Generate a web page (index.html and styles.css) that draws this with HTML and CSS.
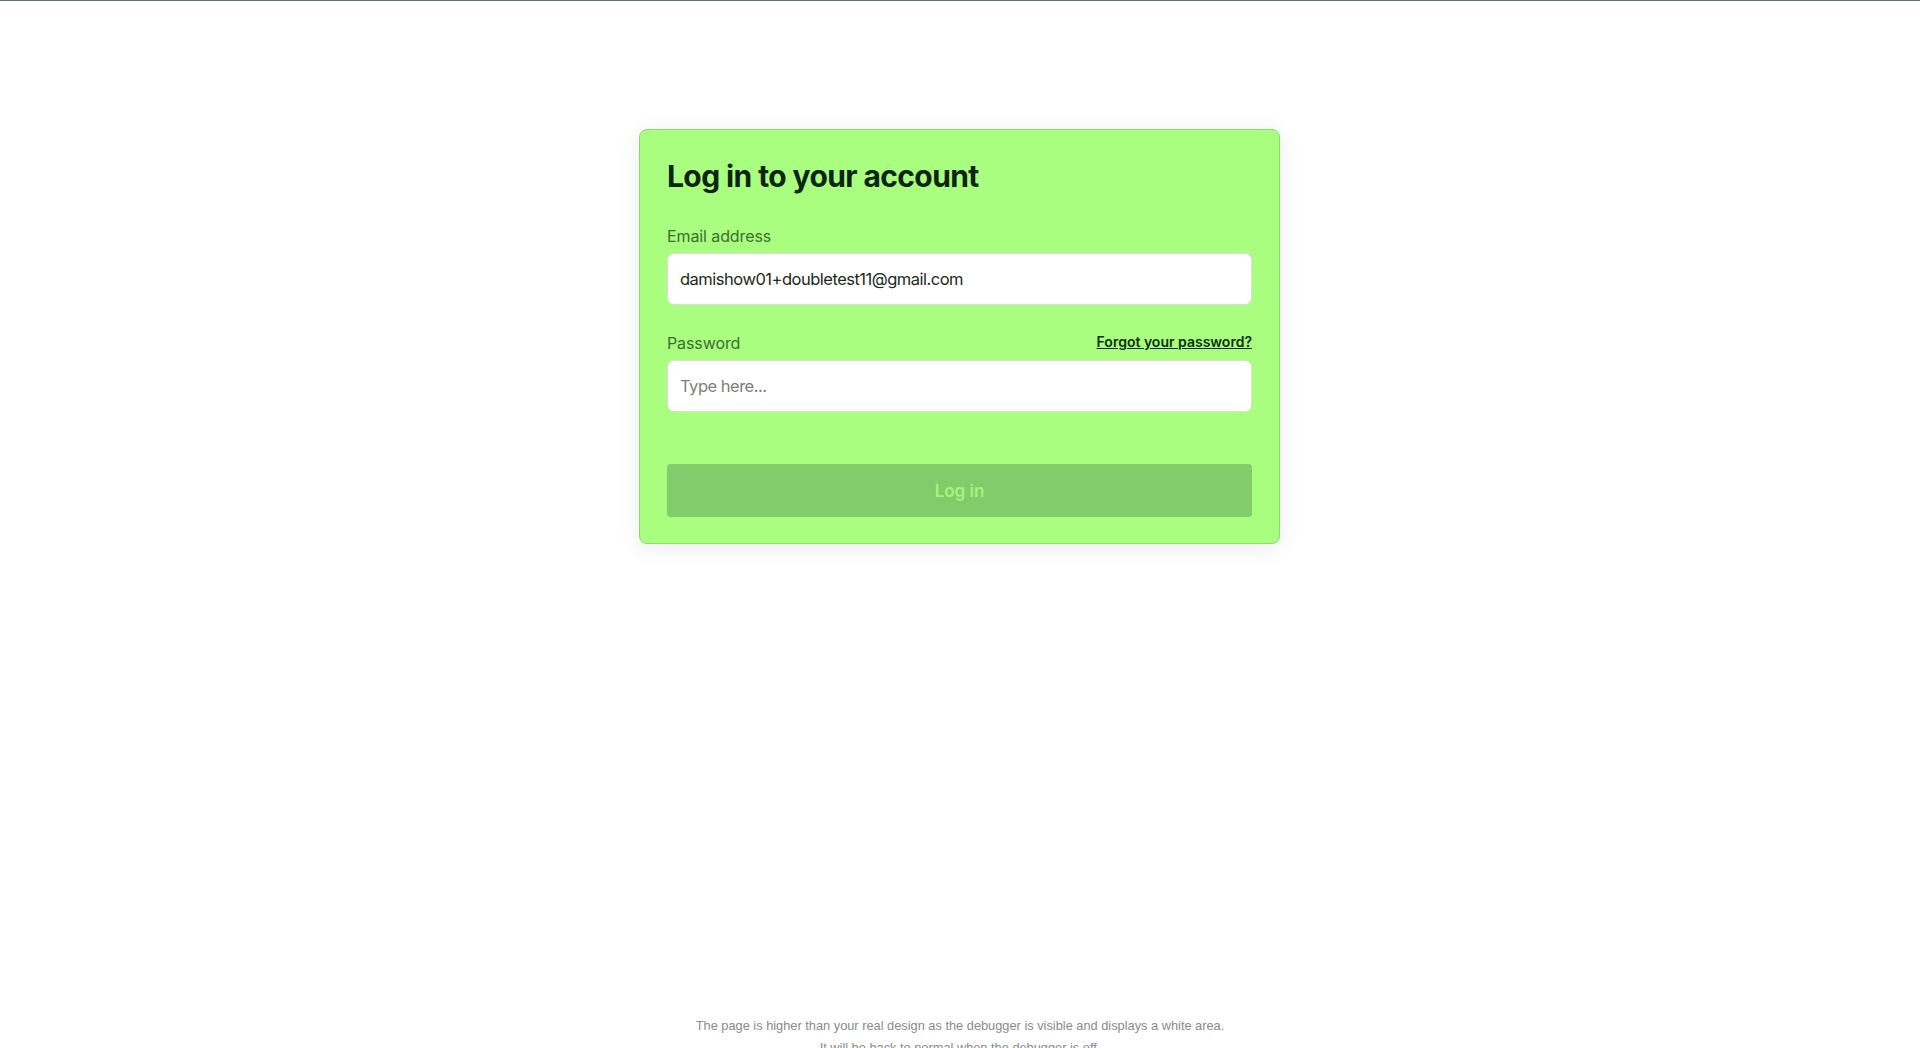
FILE: index.html
```html
<!DOCTYPE html>
<html lang="en">
<head>
<meta charset="utf-8">
<title>Log in</title>
<link rel="stylesheet" href="styles.css">
</head>
<body>
<div class="page">
  <main class="main">
    <form class="card">
      <h1 class="title">Log in to your account</h1>
      <div class="field field-email">
        <label class="label" for="email">Email address</label>
        <input class="input" id="email" type="text" value="damishow01+doubletest11@gmail.com">
      </div>
      <div class="field">
        <div class="label-row">
          <label class="label" for="password">Password</label>
          <a class="forgot" href="#">Forgot your password?</a>
        </div>
        <input class="input" id="password" type="password" placeholder="Type here...">
      </div>
      <button class="submit" type="button">Log in</button>
    </form>
  </main>
  <footer class="debug-note">
    <p>The page is higher than your real design as the debugger is visible and displays a white area.</p>
    <p>It will be back to normal when the debugger is off.</p>
  </footer>
</div>
</body>
</html>
```
FILE: styles.css
```css
* { box-sizing: border-box; }
html, body { margin: 0; padding: 0; background: #ffffff; }
body {
  font-family: Inter, "Noto Sans", sans-serif;
  border-top: 1px solid #5f7372;
}
.page {
  display: flex;
  flex-direction: column;
  align-items: center;
}
.main {
  height: 1017px;
  padding-top: 128px;
  padding-right: 1px;
  display: flex;
  justify-content: center;
  width: 100%;
}
.card {
  width: 641px;
  height: 415px;
  background: #a9fd7f;
  border: 1px solid #8ed96c;
  border-radius: 8px;
  padding: 26px 27px 26px 27px;
  box-shadow: 0 4px 24px rgba(0, 0, 0, 0.08);
  display: flex;
  flex-direction: column;
}
.title {
  margin: 0 0 30px 0;
  font-size: 30px;
  line-height: 40px;
  font-weight: 700;
  color: #0c2410;
  letter-spacing: -0.6px;
}
.field {
  display: flex;
  flex-direction: column;
  gap: 7px;
}
.field-email { margin-bottom: 28px; }
.label-row {
  display: flex;
  justify-content: space-between;
  align-items: center;
}
.label {
  font-size: 16px;
  line-height: 20px;
  color: #3c6e30;
  letter-spacing: -0.1px;
}
.forgot {
  font-size: 14px;
  line-height: 20px;
  font-weight: 600;
  color: #0f2f14;
  text-decoration: underline;
  margin-top: -2px;
}
.input {
  height: 52px;
  width: 100%;
  border: 1px solid #d9dfd4;
  border-radius: 7px;
  background: #ffffff;
  padding: 0 12px;
  font-family: Inter, "Noto Sans", sans-serif;
  font-size: 16.5px;
  letter-spacing: -0.5px;
  color: #1b2a1b;
  outline: none;
}
.input::placeholder { color: #7a7f7a; }
.submit {
  margin-top: auto;
  height: 53px;
  width: 100%;
  border: none;
  border-radius: 4px;
  background: #82cc6b;
  color: #a8f47e;
  font-family: Inter, "Noto Sans", sans-serif;
  font-size: 17px;
  font-weight: 600;
}
.debug-note {
  text-align: center;
  font-family: "Liberation Sans", Arial, sans-serif;
  font-size: 12.8px;
  color: #8a8a8a;
}
.debug-note p { margin: 0 0 6px 0; line-height: 16px; }
```
